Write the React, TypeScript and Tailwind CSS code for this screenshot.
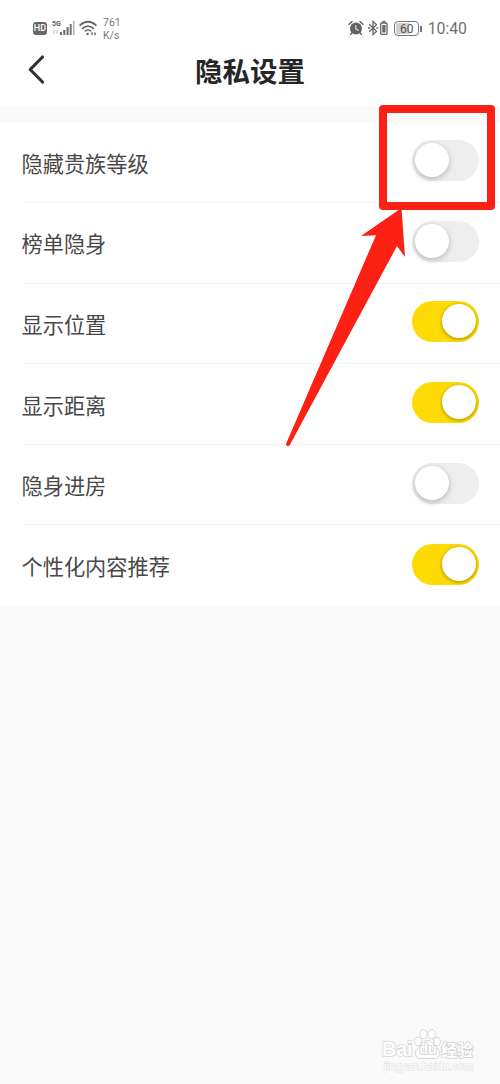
import { useState } from "react";

interface Setting {
  id: string;
  label: string;
  on: boolean;
}

const SETTINGS: Setting[] = [
  { id: "rank", label: "隐藏贵族等级", on: false },
  { id: "board", label: "榜单隐身", on: false },
  { id: "location", label: "显示位置", on: true },
  { id: "distance", label: "显示距离", on: true },
  { id: "room", label: "隐身进房", on: false },
  { id: "recommend", label: "个性化内容推荐", on: true },
];

function HdIcon() {
  return (
    <span className="flex h-[13px] w-[14px] items-center justify-center rounded-[3px] bg-[#666] font-['Roboto',sans-serif] text-[9px] font-medium leading-none text-white">
      HD
    </span>
  );
}

function SignalIcon() {
  return (
    <span className="relative block h-[18px] w-[23px]">
      <span className="absolute left-0 top-0 font-['Roboto',sans-serif] text-[7px] font-bold leading-[8px] text-[#5c5c5c]">
        5G
      </span>
      <svg className="absolute inset-0" width="23" height="18" viewBox="0 0 23 18">
        <path d="M2 10v4M5 10v4" stroke="#cccccc" strokeWidth="1.2" />
        <path d="M9 12v3M12.3 10v5M15.6 7v8" stroke="#6a6a6a" strokeWidth="2" />
        <path d="M18.7 4v11" stroke="#757575" strokeWidth="2" />
        <path d="M21.700 1v14" stroke="#b5b5b5" strokeWidth="1.6" />
      </svg>
    </span>
  );
}

function WifiIcon() {
  return (
    <svg width="18" height="16" viewBox="0 0 18 16" fill="none" stroke="#666" strokeLinecap="round">
      <path d="M1.2 5.2C5.8.6 12.2.6 16.8 5.2" strokeWidth="1.8" />
      <path d="M3.8 8.3c3-3 7.4-3 10.4 0" strokeWidth="1.8" />
      <path d="M6.3 11c1.6-1.5 3.8-1.5 5.4 0" strokeWidth="1.6" />
      <circle cx="8.6" cy="14" r="1.2" fill="#666" stroke="none" />
      <path d="M13 13v1.500M16 13v1.500" strokeWidth="1.5" />
    </svg>
  );
}

function AlarmIcon() {
  return (
    <svg width="16" height="16" viewBox="0 0 16 16">
      <path d="M1 4.2 4 1.6M15 4.2 12 1.6" stroke="#666" strokeWidth="1.5" strokeLinecap="round" />
      <circle cx="8" cy="8.4" r="6" fill="#636363" />
      <path d="M3.8 13 2.6 14.6M12.2 13l1.2 1.6" stroke="#666" strokeWidth="1.4" strokeLinecap="round" />
      <path d="M7.8 5.200v3.500l2.700 1.800" fill="none" stroke="#e8e8e8" strokeWidth="1.1" />
    </svg>
  );
}

function BluetoothIcon() {
  return (
    <svg width="20" height="16" viewBox="0 0 20 16" fill="none" stroke="#666">
      <path d="m1.2 4.2 7.3 7L5 14.6V1.4l3.5 3.4-7.3 7" strokeWidth="1.3" />
      <path d="M0 8h2.200M8.400 8h2" strokeWidth="1.3" />
      <rect x="12.7" y="3" width="6.3" height="11.4" rx="1" strokeWidth="1.3" />
      <path d="M14.3 1.7h3.200" strokeWidth="1.6" />
      <path d="M15.9 5v7.5" strokeWidth="3.200" />
    </svg>
  );
}

function StatusBar() {
  return (
    <div className="flex h-[46px] items-start pl-[33px] pr-[33px] font-['Roboto',sans-serif] text-[#707070]">
      <div className="mt-[22px]">
        <HdIcon />
      </div>
      <div className="ml-[5px] mt-[20px]">
        <SignalIcon />
      </div>
      <div className="ml-[4px] mt-[20px]">
        <WifiIcon />
      </div>
      <div className="ml-[6px] mt-[16px] text-[10.5px] leading-[13px] text-[#777]">
        <p>761</p>
        <p>K/s</p>
      </div>
      <div className="ml-auto mt-[20px]">
        <AlarmIcon />
      </div>
      <div className="ml-[4px] mt-[20px]">
        <BluetoothIcon />
      </div>
      <div className="ml-[6px] mt-[21px] flex items-center">
        <span className="flex h-[15px] w-[25px] items-center justify-center rounded-[4px] border border-[#777] p-px">
          <span className="flex h-full w-full items-center justify-center rounded-[2px] bg-linear-to-r from-[#cfcfcf] from-60% to-white to-60% text-[12px] leading-none text-[#555]">
            60
          </span>
        </span>
        <span className="ml-px h-[6px] w-[1.500px] bg-[#777]" />
      </div>
      <span className="ml-[6px] mt-[19px] text-[15.800px] leading-[20px]">10:40</span>
    </div>
  );
}

function Header() {
  return (
    <header className="relative flex h-[61px] items-start justify-center">
      <button aria-label="返回" className="absolute left-[27px] top-[8px]">
        <svg width="20" height="32" viewBox="0 0 20 32" fill="none">
          <path d="M15.5 3 3.2 15.5 15.5 28" stroke="#333" strokeWidth="3.2" strokeLinecap="round" strokeLinejoin="round" />
        </svg>
      </button>
      <h1 className="mt-[4px] text-[27.5px] font-bold leading-[40px] text-[#262626]">隐私设置</h1>
    </header>
  );
}

function Toggle({ on, onClick }: { on: boolean; onClick: () => void }) {
  return (
    <button
      role="switch"
      aria-checked={on}
      onClick={onClick}
      className={`mb-[3px] flex h-[41px] w-[67px] items-center rounded-full ${
        on ? "justify-end bg-[#fedb04] pr-[3px]" : "justify-start bg-[#eeeeee] pl-[3px]"
      }`}
    >
      <span
        className={`mb-px size-[34px] rounded-full bg-white ${
          on ? "shadow-[0_1px_3px_1px_rgba(110,90,0,0.4)]" : "shadow-[0_2px_5px_1px_rgba(0,0,0,0.18)]"
        }`}
      />
    </button>
  );
}

// red box and arrow pointing at the first switch
function Callout() {
  return (
    <>
      <div className="pointer-events-none absolute left-[379px] top-[105px] h-[105px] w-[116px] rounded-[4px] border-8 border-[#fc2015]" />
      <svg
        className="pointer-events-none absolute left-[280px] top-[205px]"
        width="135"
        height="245"
        viewBox="280 205 135 245"
      >
        <path
          d="M401.5 208 361 236l15-.8L286.2 443.5c-.8 2.4 2.2 3.7 3.6 1.5L397 246l8 11Z"
          fill="#fc2015"
        />
      </svg>
    </>
  );
}

function Watermark() {
  return (
    <div className="pointer-events-none absolute left-[382px] top-[1028px] h-[48px] w-[96px] text-white">
      <div className="flex h-[32px] items-end">
        <span className="w-[32px] font-['Liberation_Sans',sans-serif] text-[20px] font-bold leading-[22px] tracking-[-0.3px] [paint-order:stroke_fill] [-webkit-text-stroke:1.6px_#d6d6d6]">
          Bai
        </span>
        <span className="relative h-[31px] w-[27px]">
          <svg width="27" height="31" viewBox="0 0 27 31" fill="#fff" stroke="#d6d6d6">
            <ellipse cx="4" cy="12.500" rx="3.300" ry="4.200" />
            <ellipse cx="9.4" cy="5.2" rx="3.6" ry="4.6" />
            <ellipse cx="17.7" cy="5.2" rx="3.6" ry="4.6" />
            <ellipse cx="23" cy="12.500" rx="3.300" ry="4.200" />
            <path d="M13.5 11.500c-4.500 0-5.500 4-9 7-5 4-3.500 11 2 11h14c5.500 0 7-7 2-11-3.500-3-4.500-7-9-7Z" />
          </svg>
          <span className="absolute left-[5.500px] top-[12px] font-['Liberation_Sans',sans-serif] text-[14px] font-bold leading-[16px] [paint-order:stroke_fill] [-webkit-text-stroke:1.6px_#d0d0d0]">
            du
          </span>
        </span>
        <span className="whitespace-nowrap text-[16px] font-bold leading-[21px] [paint-order:stroke_fill] [-webkit-text-stroke:1.5px_#d2d2d2]">
          经验
        </span>
      </div>
      <p className="ml-[2px] font-['Liberation_Sans',sans-serif] text-[11px] leading-[13px] [paint-order:stroke_fill] [-webkit-text-stroke:1.2px_#e2e2e2]">
        jingyan.baidu.com
      </p>
    </div>
  );
}

export default function App() {
  const [settings, setSettings] = useState(SETTINGS);

  function toggle(id: string) {
    setSettings(settings.map((s) => (s.id === id ? { ...s, on: !s.on } : s)));
  }

  return (
    <div className="relative h-[1084px] w-[500px] overflow-hidden bg-[#fafafa] font-['Noto_Sans_CJK_SC',sans-serif]">
      <div className="bg-white">
        <StatusBar />
        <Header />
      </div>

      <ul className="mt-[15.500px] bg-white pl-[21.500px]">
        {settings.map((s) => (
          <li
            key={s.id}
            className="flex h-[80.600px] items-center justify-between border-b border-[#f4f4f4] pr-[21px] last:border-b-0"
          >
            <span className="mt-[1px] text-[21.200px] leading-[32px] text-[#484848]">{s.label}</span>
            <Toggle on={s.on} onClick={() => toggle(s.id)} />
          </li>
        ))}
      </ul>

      <Callout />
      <Watermark />
    </div>
  );
}
